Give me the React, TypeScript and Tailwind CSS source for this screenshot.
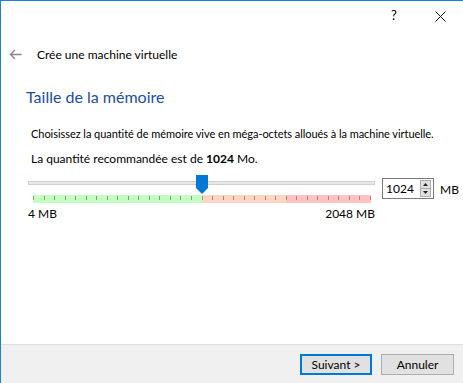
import React from 'react';

const ticks = Array.from({ length: 33 });

const Thumb = () => (
  <svg width="12" height="19" viewBox="0 0 12 19" className="block">
    <path d="M0 0 H12 V13 L6 19 L0 13 Z" fill="#0078d7" />
  </svg>
);

const BackArrow = () => (
  <svg width="13" height="11" viewBox="0 0 13 11" className="block">
    <path d="M12.5 5.5 H1.5 M6 1 L1.5 5.5 L6 10" fill="none" stroke="#8a8a8a" strokeWidth="1.4" />
  </svg>
);

const CloseIcon = () => (
  <svg width="11" height="11" viewBox="0 0 11 11" className="block">
    <path d="M0.5 0.5 L10.5 10.5 M10.5 0.5 L0.5 10.5" stroke="#111" strokeWidth="1" />
  </svg>
);

export default function App() {
  return (
    <div
      className="w-[463px] h-[383px] overflow-hidden bg-white border-l border-t border-[#1883d7] flex flex-col text-[12px] text-black whitespace-nowrap"
      style={{ fontFamily: 'Lato, "Liberation Sans", sans-serif' }}
    >
      {/* barre de titre */}
      <div className="h-[29px] flex justify-end">
        <div className="w-[46px] flex items-center justify-center text-[13px] pt-[1px]">?</div>
        <div className="w-[46px] flex items-center justify-center pt-[2px]">
          <CloseIcon />
        </div>
      </div>

      {/* en-tête */}
      <div className="h-[49px] flex items-center">
        <div className="ml-[8px] w-[28px]">
          <BackArrow />
        </div>
        <div className="pt-[1px]">Crée une machine virtuelle</div>
      </div>

      {/* contenu */}
      <div className="flex-1 flex flex-col pl-[25px]">
        <div className="text-[16px] leading-[20px] text-[#1a4ea3] mt-[8px]">Taille de la mémoire</div>
        <div className="pl-[5px] mt-[19px] leading-[15px] text-[11px] tracking-[-0.05px]">
          Choisissez la quantité de mémoire vive en méga-octets alloués à la machine virtuelle.
        </div>
        <div className="pl-[5px] mt-[10px] leading-[15px]">
          La quantité recommandée est de <b>1024</b> Mo.
        </div>

        {/* slider */}
        <div className="flex mt-[9px]">
          <div className="w-[347px] ml-[2px] flex flex-col">
            <div className="relative h-[20px]">
              <div className="absolute left-0 right-0 top-[6px] h-[4px] bg-[#e7e7e7] border border-[#d0d0d0]" />
              <div className="absolute left-[168px] top-0">
                <Thumb />
              </div>
            </div>
            <div className="ml-[5px] w-[338px] h-[8px] flex">
              <div className="w-[169px] bg-[#c3ffc3]" />
              <div className="w-[84px] bg-[#ffd6c2]" />
              <div className="flex-1 bg-[#ffc2c2]" />
            </div>
            <div className="ml-[5px] w-[338px] h-[4px] -mt-[7px] flex justify-between">
              {ticks.map((_, i) => (
                <div key={i} className="w-px h-[4px] bg-[#a08d84]" />
              ))}
            </div>
            <div className="flex justify-between mt-[7px] leading-[14px]">
              <span>4 MB</span>
              <span>2048 MB</span>
            </div>
          </div>

          <div className="ml-[7px] mt-[3px] flex items-start">
            <div className="w-[52px] h-[21px] border border-[#7a7a7a] flex items-center justify-between pl-[3px] pr-[2px]">
              <span>1024</span>
              <div className="w-[11px] h-[17px] flex flex-col border border-[#adadad] bg-[#e1e1e1]">
                <div className="flex-1 flex items-center justify-center border-b border-[#adadad]">
                  <svg width="5" height="3" viewBox="0 0 5 3"><path d="M2.5 0 L5 3 H0 Z" fill="#222" /></svg>
                </div>
                <div className="flex-1 flex items-center justify-center">
                  <svg width="5" height="3" viewBox="0 0 5 3"><path d="M0 0 H5 L2.5 3 Z" fill="#222" /></svg>
                </div>
              </div>
            </div>
            <span className="ml-[6px] mt-[3px]">MB</span>
          </div>
        </div>
      </div>

      {/* pied */}
      <div className="h-[39px] border-t border-[#dfdfdf] bg-[#f0f0f0] flex items-start justify-end pt-[9px] pr-[9px] gap-[9px]">
        <button className="w-[72px] h-[21px] border-2 border-[#0078d7] bg-[#e1e1e1] flex items-center justify-center">
          Suivant &gt;
        </button>
        <button className="w-[73px] h-[21px] border border-[#adadad] bg-[#e1e1e1] flex items-center justify-center">
          Annuler
        </button>
      </div>
    </div>
  );
}
